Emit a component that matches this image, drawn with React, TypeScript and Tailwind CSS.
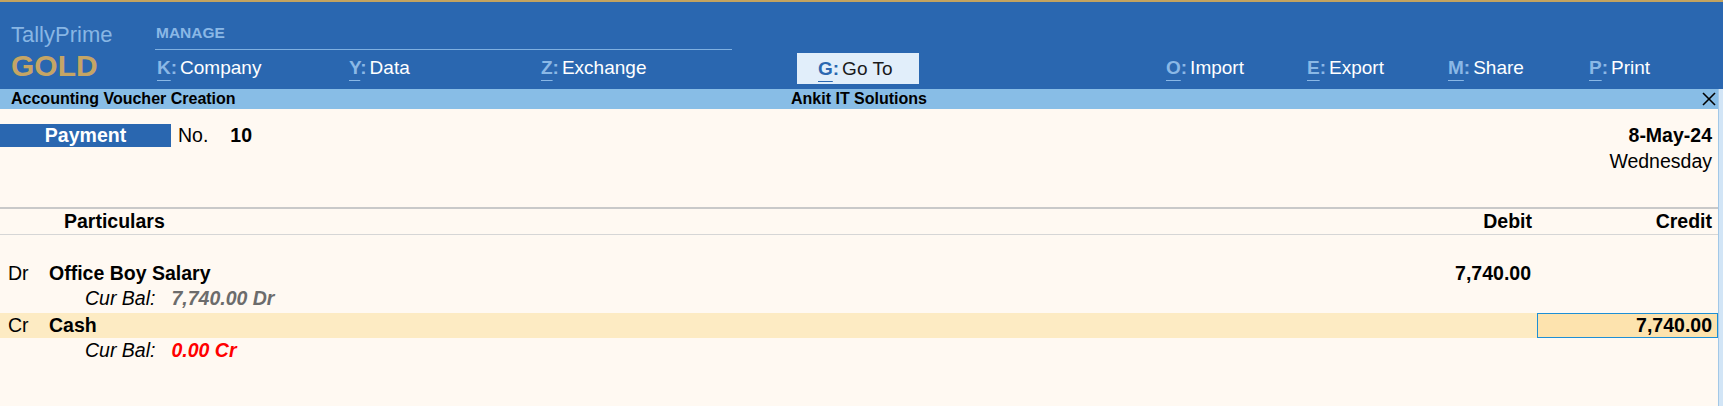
import React from 'react';

interface MenuItemProps {
  k: string;
  label: string;
  className?: string;
}

const MenuItem: React.FC<MenuItemProps> = ({ k, label, className }) => {
  return (
    <div className={`${className ?? ''} shrink-0 pl-[2px] text-[19px] leading-[24px] whitespace-nowrap`}>
      <span className="font-bold text-[#8ab8e6]">
        <span className="underline decoration-1 underline-offset-[6px]">{k}</span>:
      </span>
      <span className="ml-[3px] text-white">{label}</span>
    </div>
  );
};

const App: React.FC = () => {
  return (
    <div className="h-screen flex flex-col overflow-hidden bg-[#fff9f2] text-black font-['Liberation_Sans',Arial,sans-serif]">
      {/* top menu bar */}
      <header className="h-[89px] shrink-0 flex overflow-hidden border-t-2 border-[#c3a35f] bg-[#2a67b0]">
        <div className="w-[155px] shrink-0 pl-[11px] pt-[22px]">
          <div className="text-[22px] leading-[22px] text-[#88b6e4]">TallyPrime</div>
          <div className="mt-[5px] text-[30px] leading-[29px] font-bold text-[#c5a565]">GOLD</div>
        </div>

        <div className="w-[577px] shrink-0 pt-[23px]">
          <div className="pl-[1px] text-[15.5px] leading-[15px] font-bold text-[#8ab8e6]">MANAGE</div>
          <div className="mt-[9px] h-px bg-[#7fb0e0]" />
          <div className="mt-[6px] flex">
            <MenuItem k="K" label="Company" className="w-[192px]" />
            <MenuItem k="Y" label="Data" className="w-[192px]" />
            <MenuItem k="Z" label="Exchange" className="w-[193px]" />
          </div>
        </div>

        <div className="ml-[65px] shrink-0 pt-[51px]">
          <div className="h-[31px] w-[122px] flex items-center pl-[21px] bg-[#e1eefa] text-[19px] leading-[24px] whitespace-nowrap">
            <span className="font-bold text-[#2a67b0]">
              <span className="underline decoration-1 underline-offset-[6px]">G</span>:
            </span>
            <span className="ml-[3px] text-[#1a1a1a]">Go To</span>
          </div>
        </div>

        <div className="ml-[245px] shrink-0 pt-[54px] flex">
          <MenuItem k="O" label="Import" className="w-[141px]" />
          <MenuItem k="E" label="Export" className="w-[141px]" />
          <MenuItem k="M" label="Share" className="w-[141px]" />
          <MenuItem k="P" label="Print" className="w-[141px]" />
        </div>
      </header>

      <div className="flex-1 flex min-h-0">
        <main className="flex-1 min-w-0">
          {/* title bar */}
          <div className="h-[20px] grid grid-cols-[1fr_auto_1fr] items-center bg-[#88bde6] text-[16px] leading-[20px] font-bold">
            <div className="pl-[11px]">Accounting Voucher Creation</div>
            <div>Ankit IT Solutions</div>
            <div className="justify-self-end pr-[2px] flex">
              <svg width="14" height="14" viewBox="0 0 14 14" fill="none" stroke="#000" strokeWidth="1.6">
                <line x1="1" y1="1" x2="13" y2="13" />
                <line x1="13" y1="1" x2="1" y2="13" />
              </svg>
            </div>
          </div>

          {/* voucher head */}
          <div className="h-[98px] flex justify-between pt-[15px] pr-[6px] text-[19.5px]">
            <div className="flex items-start">
              <div className="w-[171px] h-[23px] leading-[23px] bg-[#2a67b0] text-center font-bold text-white">Payment</div>
              <div className="ml-[7px] leading-[23px]">No.</div>
              <div className="ml-[22px] leading-[23px] font-bold">10</div>
            </div>
            <div className="flex flex-col items-end">
              <div className="leading-[23px] font-bold">8-May-24</div>
              <div className="mt-[3px] leading-[23px]">Wednesday</div>
            </div>
          </div>

          <div className="h-[2px] bg-[#c9c9c9]" />
          <div className="h-[25px] flex text-[19.5px] leading-[25px] font-bold">
            <div className="flex-1 pl-[64px]">Particulars</div>
            <div className="w-[180px] text-right pr-[5px]">Debit</div>
            <div className="w-[181px] text-right pr-[6px]">Credit</div>
          </div>
          <div className="h-px bg-[#d6d6d6]" />

          {/* entries */}
          <div className="pt-[26px] text-[19.5px] leading-[25px]">
            <div className="h-[25px] flex">
              <div className="w-[49px] pl-[8px]">Dr</div>
              <div className="flex-1 font-bold">Office Boy Salary</div>
              <div className="w-[180px] text-right pr-[6px] font-bold">7,740.00</div>
              <div className="w-[181px]" />
            </div>
            <div className="h-[27px] pl-[85px] italic">
              Cur Bal:<span className="ml-[16px] font-bold text-[#6c6c6c]">7,740.00 Dr</span>
            </div>
            <div className="h-[25px] flex bg-[#fdebc3]">
              <div className="w-[49px] pl-[8px]">Cr</div>
              <div className="flex-1 font-bold">Cash</div>
              <div className="w-[180px]" />
              <div className="w-[181px] h-[25px] border border-[#1e8fd5] bg-[#fde3ae] text-right pr-[5px] leading-[23px] font-bold">7,740.00</div>
            </div>
            <div className="h-[25px] pl-[85px] italic">
              Cur Bal:<span className="ml-[16px] font-bold text-[#ff0000]">0.00 Cr</span>
            </div>
          </div>
        </main>
        <div className="w-[5px] shrink-0 border-l border-[#a3c8e7] bg-[#d2e5f6]" />
      </div>
    </div>
  );
};

export default App;
